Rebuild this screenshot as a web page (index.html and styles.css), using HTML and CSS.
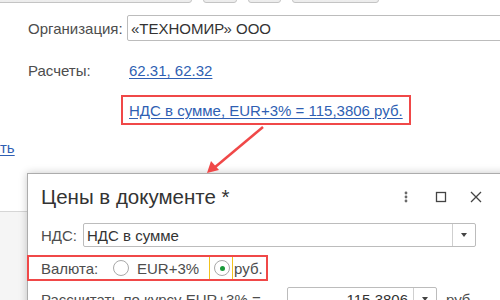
FILE: index.html
```html
<!DOCTYPE html>
<html lang="ru">
<head>
    <meta charset="UTF-8">
    <title>Цены в документе</title>
    <link rel="stylesheet" href="styles.css">
</head>
<body>
<div class="toolbar">
    <span class="tb-btn b1"></span>
    <span class="tb-btn b2"></span>
    <span class="tb-btn b3"></span>
    <span class="tb-btn b4"></span>
</div>

<div class="form">
    <div class="row org">
        <span class="label">Организация:</span>
        <div class="field">«ТЕХНОМИР» ООО</div>
    </div>
    <div class="row calc">
        <span class="label">Расчеты:</span>
        <a class="link" href="#">62.31, 62.32</a>
    </div>
    <div class="row vat">
        <a class="link marked" href="#">НДС в сумме, EUR+3% = 115,3806 руб.</a>
    </div>
</div>
<div class="cut"><a class="link" href="#">ть</a></div>
<div class="lower"></div>

<div class="dialog">
    <div class="dlg-head">
        <span class="dlg-title">Цены в документе *</span>
        <div class="dlg-icons">
            <svg class="ic-dots" width="4" height="12" viewBox="0 0 4 12">
                <circle cx="2" cy="2" r="1.4"/>
                <circle cx="2" cy="6" r="1.4"/>
                <circle cx="2" cy="10" r="1.4"/>
            </svg>
            <svg class="ic-max" width="12" height="12" viewBox="0 0 12 12">
                <rect x="1.5" y="1.5" width="9" height="9"/>
            </svg>
            <svg class="ic-close" width="12" height="12" viewBox="0 0 12 12">
                <path d="M1 1 L11 11 M11 1 L1 11"/>
            </svg>
        </div>
    </div>
    <div class="dlg-row">
        <span class="dlg-label">НДС:</span>
        <div class="select wide">
            <span class="select-text">НДС в сумме</span>
            <span class="select-btn"><i class="tri"></i></span>
        </div>
    </div>
    <div class="dlg-row currency">
        <span class="dlg-label">Валюта:</span>
        <span class="radio"></span>
        <span class="opt">EUR+3%</span>
        <span class="focus"><span class="radio on"></span></span>
        <span class="opt">руб.</span>
    </div>
    <div class="dlg-row rate">
        <span class="dlg-label long">Рассчитать по курсу EUR+3% =</span>
        <div class="select short">
            <span class="select-text num">115,3806</span>
            <span class="select-btn"><i class="tri"></i></span>
        </div>
        <span class="unit">руб.</span>
    </div>
</div>

<svg class="arrow" width="500" height="300" viewBox="0 0 500 300">
    <line x1="263" y1="127" x2="214" y2="168"/>
    <path d="M207 173 L211 161 L219 170 Z"/>
</svg>
</body>
</html>
```

FILE: styles.css
```css
* {
    box-sizing: border-box;
}

body {
    margin: 0;
    width: 500px;
    height: 300px;
    overflow: hidden;
    position: relative;
    background: #fff;
    color: #4d4d4d;
    font: 15px/17px "Liberation Sans", Arial, sans-serif;
}

.toolbar {
    display: flex;
    gap: 11px;
    height: 22px;
    margin-top: -19px;
}

.tb-btn {
    height: 22px;
    border: 1px solid #c4c4c4;
    border-radius: 3px;
    background: linear-gradient(#fbfbfb, #ececec);
}

.b1 { width: 202px; margin-left: -10px; }
.b2 { width: 34px; }
.b3 { width: 33px; }
.b4 { width: 87px; }

.form {
    padding-left: 28px;
}

.row {
    display: flex;
    align-items: center;
}

.org {
    margin-top: 12px;
}

.org .label {
    width: 99px;
}

.field {
    flex: 1;
    height: 26px;
    margin-right: -10px;
    padding: 4px 3px;
    border: 1px solid #bcbcbc;
    border-radius: 2px;
    color: #333;
}

.calc {
    margin-top: 19px;
    height: 20px;
}

.calc .label {
    width: 101px;
}

.link {
    color: #2f5fb3;
    text-decoration: underline;
    text-underline-offset: 2px;
}

.vat {
    margin-top: 15px;
    padding-left: 93px;
}

.marked {
    display: inline-block;
    padding: 5px 6px 4px;
    border: 2px solid #f04848;
}

.cut {
    margin-top: 14px;
}

.lower {
    margin-top: 55px;
    height: 100px;
    border-top: 1px solid #d6d6d6;
    background: #f5f5f5;
}

.dialog {
    position: absolute;
    left: 27px;
    top: 173px;
    width: 520px;
    height: 160px;
    padding: 0 13px;
    border: 1px solid #acacac;
    background: #fff;
    box-shadow: 0 0 8px rgba(0, 0, 0, 0.22);
}

.dlg-head {
    display: flex;
    align-items: center;
    width: 441px;
    height: 46px;
}

.dlg-title {
    font-size: 20.5px;
    line-height: 24px;
    color: #333;
}

.dlg-icons {
    display: flex;
    align-items: center;
    margin-left: auto;
}

.ic-dots {
    fill: #6a6a6a;
}

.ic-max {
    margin-left: 27px;
    fill: none;
    stroke: #444;
    stroke-width: 1.3;
}

.ic-close {
    margin-left: 23px;
    stroke: #444;
    stroke-width: 1.3;
}

.dlg-row {
    display: flex;
    align-items: center;
}

.dlg-label {
    width: 42px;
}

.dlg-row:nth-child(2) {
    margin-top: 3px;
}

.select {
    display: flex;
    height: 24px;
    border: 1px solid #bcbcbc;
    border-radius: 2px;
    color: #333;
}

.select.wide {
    width: 393px;
}

.select.short {
    width: 150px;
}

.select-text {
    flex: 1;
    padding: 3px 3px;
}

.select-text.num {
    text-align: right;
    padding-right: 5px;
}

.select-btn {
    width: 23px;
    border-left: 1px solid #cfcfcf;
    display: flex;
    align-items: center;
    justify-content: center;
}

.tri {
    width: 0;
    height: 0;
    border-left: 3px solid transparent;
    border-right: 3px solid transparent;
    border-top: 4px solid #444;
}

.currency {
    display: inline-flex;
    height: 26px;
    margin: 8px 0 0 -14px;
    padding: 0 3px 0 12px;
    border: 2px solid #f04848;
}

.currency .dlg-label {
    width: 72px;
}

.radio {
    width: 16px;
    height: 16px;
    border: 1px solid #a8a8a8;
    border-radius: 50%;
    background: #fff;
    display: flex;
    align-items: center;
    justify-content: center;
}

.radio.on::after {
    content: "";
    width: 5px;
    height: 5px;
    border-radius: 50%;
    background: #1a9a3a;
}

.opt {
    margin-left: 8px;
}

.focus {
    display: flex;
    align-items: center;
    height: 100%;
    margin-left: 10px;
    padding: 0 2px 0 4px;
    border-left: 1px solid #f2c21b;
    border-right: 1px solid #f2c21b;
}

.focus + .opt {
    margin-left: 1px;
}

.rate {
    margin-top: 6px;
}

.dlg-label.long {
    width: 246px;
}

.unit {
    margin-left: 9px;
}

.arrow {
    position: absolute;
    left: 0;
    top: 0;
    pointer-events: none;
}

.arrow line {
    stroke: #f04848;
    stroke-width: 2.5;
}

.arrow path {
    fill: #f04848;
}
```
